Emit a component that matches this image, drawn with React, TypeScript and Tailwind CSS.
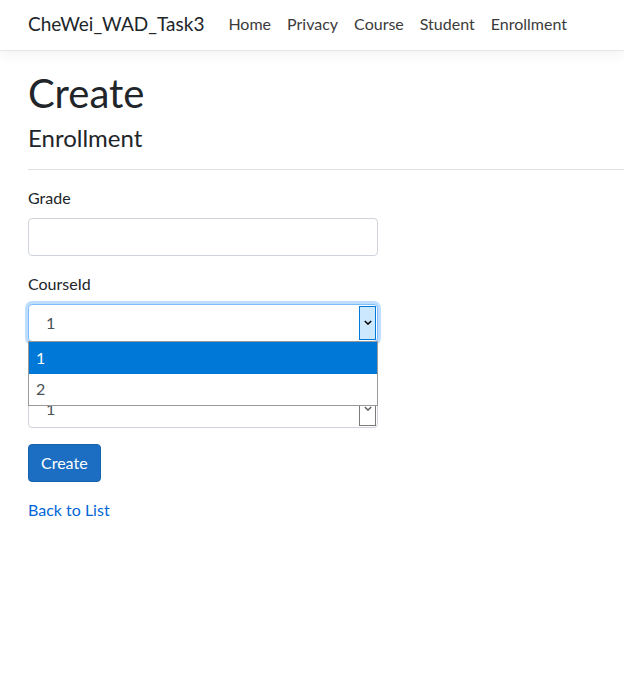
import React from "react";

const font = { fontFamily: "Lato, 'Noto Sans', sans-serif" };

const Chevron = ({ className }: { className?: string }) => (
  <svg viewBox="0 0 10 6" className={className} width="8" height="5">
    <path d="M1 1l4 4 4-4" fill="none" stroke="currentColor" strokeWidth="1.8" />
  </svg>
);

const NavBar = () => {
  const links = ["Home", "Privacy", "Course", "Student", "Enrollment"];
  return (
    <header className="h-[51px] border-b border-[#e5e5e5] shadow-[0_4px_12px_rgba(0,0,0,0.05)] bg-white flex items-center px-[28px] pb-[2px]">
      <span className="text-[19px] text-[#212529] mr-[24px]">CheWei_WAD_Task3</span>
      <nav className="flex gap-[16px]">
        {links.map((l) => (
          <a key={l} href="#" className="text-[16px] text-[#3b3b3b]">
            {l}
          </a>
        ))}
      </nav>
    </header>
  );
};

const App = () => {
  return (
    <div className="min-h-[678px] bg-white text-[#212529]" style={font}>
      <NavBar />
      <main className="pl-[28px] pt-[18px]">
        <h1 className="text-[40px] leading-[1.2] mb-[7px]">Create</h1>
        <h4 className="text-[24px] leading-[1.2]">Enrollment</h4>
        <hr className="mt-[16px] mb-[16px] border-t border-[#e0e0e0]" />
        <form className="w-[350px]" onSubmit={(e) => e.preventDefault()}>
          <div className="mb-[16px]">
            <label className="block text-[16px] leading-[24px] mb-[8px]">Grade</label>
            <input className="w-full h-[38px] border border-[#ced4da] rounded-[4px] px-[12px] text-[16px] text-[#495057] outline-none" />
          </div>

          <div className="mb-[16px] relative">
            <label className="block text-[16px] leading-[24px] mb-[8px]">CourseId</label>
            <div className="relative h-[38px] border border-[#80bdff] rounded-[4px] shadow-[0_0_0_3px_rgba(0,123,255,0.25)] flex items-center pl-[17px] text-[16px] text-[#495057] bg-white">
              1
              <div className="absolute right-[1px] top-[1px] bottom-[1px] w-[17px] bg-[#cce8ff] border border-[#0078d7] flex items-center justify-center text-black">
                <Chevron />
              </div>
            </div>
            {/* open native list */}
            <div className="absolute left-0 right-0 top-[69px] z-10 bg-white border border-[#999999] text-[16px]">
              <div className="h-[32px] bg-[#0078d7] text-white flex items-center pl-[7px]">1</div>
              <div className="h-[31px] text-[#495057] flex items-center pl-[7px]">2</div>
            </div>
          </div>

          <div className="mb-[16px]">
            {/* covered by the open list in the screenshot */}
            <label className="invisible block text-[16px] leading-[24px] mb-[8px]">StudentId</label>
            <div className="relative h-[38px] border border-[#ced4da] rounded-[4px] flex items-center pl-[17px] text-[16px] text-[#495057] bg-white">
              1
              <div className="absolute right-[1px] top-[1px] bottom-[1px] w-[17px] bg-white border border-[#7a7a7a] flex items-center justify-center text-[#606060]">
                <Chevron />
              </div>
            </div>
          </div>

          <button
            type="submit"
            className="h-[38px] px-[12px] bg-[#1b6ec2] border border-[#1861ac] rounded-[4px] text-white text-[16px]"
          >
            Create
          </button>
        </form>
        <div className="mt-[16px]">
          <a href="#" className="text-[16px] leading-[24px] text-[#0366d6]">
            Back to List
          </a>
        </div>
      </main>
    </div>
  );
};

export default App;
